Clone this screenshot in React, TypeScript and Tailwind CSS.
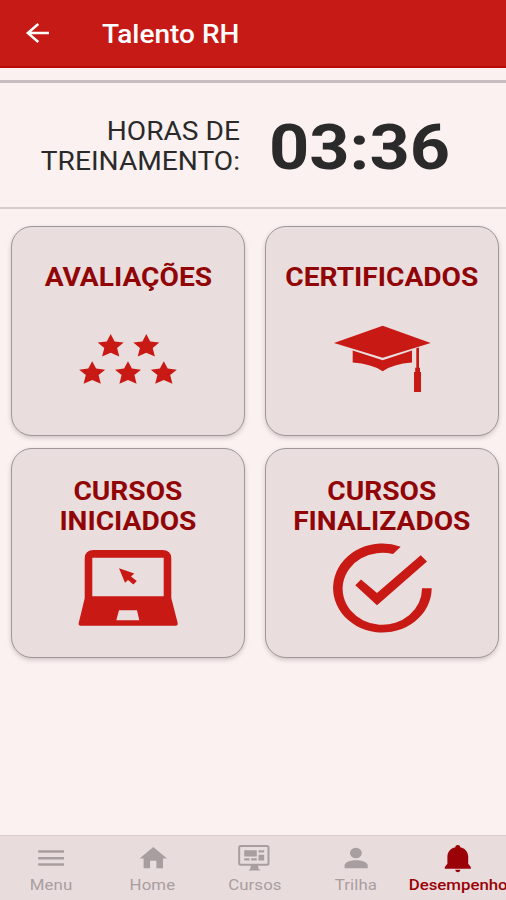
import React from 'react';
import clsx from 'clsx';

const STAR = 'M13 0L16.9 7.4L26 8.6L19.4 13.9L21.6 22.5L13 18.8L4.4 22.5L6.6 13.9L0 8.6L9.1 7.4Z';

const stars = [
  [21.7, 12],
  [57.3, 12],
  [3.2, 39.2],
  [39, 39.2],
  [74.8, 39.2],
];

const StarsIcon = () => (
  <svg width="104" height="96" viewBox="0 0 104 96" fill="currentColor">
    {stars.map(([x, y]) => (
      <path key={`${x}-${y}`} d={STAR} transform={`translate(${x} ${y})`} />
    ))}
  </svg>
);

const CapIcon = () => (
  <svg width="104" height="96" viewBox="0 0 104 96" fill="currentColor">
    <path d="M4 21L52.7 3.7L100.7 21L52.7 35.7Z" />
    <path d="M22.7 28.4L52.7 38.2L82 28.4V40.6Q63 42 52.7 49.3Q42 42 22.7 40.6Z" />
    <path d="M86.3 26.3L89 25.4V45.7H90V50H91V70H84V50H85.2V45.7H86.3Z" />
  </svg>
);

const LaptopIcon = () => (
  <svg width="104" height="96" viewBox="0 0 104 96" fill="currentColor">
    <path
      fillRule="evenodd"
      d="M17.7 10H86.3Q95.3 10 95.3 18.5V58.3L101.7 83Q102 85.7 99.7 85.7H4.7Q2.2 85.7 2.7 83L8.7 58.3V18.5Q8.7 10 17.7 10ZM16.3 17.7V56.2H87.7V17.7ZM43 70.3L40.3 80.3H63.3L61 70.3Z"
    />
    <path d="M43 28.3L58.3 33.4L55 36.6L60.8 41L57.4 44.6L52 40L49 42.7Z" />
  </svg>
);

const CheckIcon = () => (
  <svg width="104" height="96" viewBox="0 0 104 96" fill="currentColor">
    <path d="M101.7 48.2A49.3 44.5 0 1 1 70.7 6.7L63 14.1A39.7 36 0 1 0 92 48.2Z" />
    <path d="M31 39.5L47 53L90.7 15.3L97 21.5L47 65.3L25.3 45.3Z" />
  </svg>
);

const MenuIcon = () => (
  <svg width="36" height="32" viewBox="0 0 36 32" fill="currentColor">
    <path d="M5.2 8.2H31V10.7H5.2ZM5.2 15H31V17.5H5.2ZM5.2 21.3H31V23.8H5.2Z" />
  </svg>
);

const HomeIcon = () => (
  <svg width="36" height="32" viewBox="0 0 36 32" fill="currentColor">
    <path d="M18.3 5L32 16.4H28V26.3H21.4V18.7H15.1V26.3H8.6V16.4H4.6Z" />
  </svg>
);

const CoursesIcon = () => (
  <svg width="36" height="32" viewBox="0 0 36 32" fill="currentColor">
    <rect x="3.2" y="4" width="29.3" height="18.8" rx="1.5" fill="none" stroke="currentColor" strokeWidth="2" />
    <path d="M15 23H21.8L22.4 26.5L24.4 28.4H12.6L14.4 26.5Z" />
    <path d="M8.2 8.3H20.8V14.6H8.2ZM22.5 8.3H28.2V10.6H22.5ZM22.5 12.8H28.2V18.4H22.5ZM8.2 16.2H13.5V18.4H8.2ZM15.2 16.2H20.8V18.4H15.2Z" />
  </svg>
);

const PersonIcon = () => (
  <svg width="36" height="32" viewBox="0 0 36 32" fill="currentColor">
    <ellipse cx="17.9" cy="11" rx="5.9" ry="5.3" />
    <path d="M6.6 26.3V23.6C6.6 20 13 18.3 18.1 18.3S29.7 20 29.7 23.6V26.3Z" />
  </svg>
);

const BellIcon = () => (
  <svg width="36" height="32" viewBox="0 0 36 32" fill="currentColor">
    <path d="M17.8 3C19.3 3 20.2 3.9 20.2 5.2C25.3 6.3 28.2 10 28.2 14.6V21.8L30.8 25V26.8H4.8V25L7.4 21.8V14.6C7.4 10 10.3 6.3 15.4 5.2C15.4 3.9 16.3 3 17.8 3Z" />
    <path d="M15.3 27.8H20.3C20.3 29.3 19.2 30.2 17.8 30.2S15.3 29.3 15.3 27.8Z" />
  </svg>
);

const cards = [
  { lines: ['AVALIAÇÕES'], icon: <StarsIcon />, pad: 'pt-[36px]', gap: 'mt-[29px]' },
  { lines: ['CERTIFICADOS'], icon: <CapIcon />, pad: 'pt-[36px]', gap: 'mt-[29px]' },
  { lines: ['CURSOS', 'INICIADOS'], icon: <LaptopIcon />, pad: 'pt-[28px]', gap: 'mt-[3px]' },
  { lines: ['CURSOS', 'FINALIZADOS'], icon: <CheckIcon />, pad: 'pt-[28px]', gap: 'mt-[3px]' },
];

const tabs = [
  { label: 'Menu', icon: <MenuIcon /> },
  { label: 'Home', icon: <HomeIcon /> },
  { label: 'Cursos', icon: <CoursesIcon /> },
  { label: 'Trilha', icon: <PersonIcon /> },
  { label: 'Desempenho', icon: <BellIcon />, active: true },
];

const App = () => {
  return (
    <div className="flex h-[900px] w-[506px] flex-col overflow-hidden bg-[#fbf1f1] font-['Roboto',sans-serif]">
      <header className="flex h-[68px] shrink-0 items-center border-b-2 border-[#b90806] bg-[#c61a16] pl-[25px] text-white">
        <button aria-label="Voltar">
          <svg width="25" height="22" viewBox="0 0 25 22" fill="none" stroke="currentColor" strokeWidth="2.4">
            <path d="M24 11H3M13.3 2L2.8 11L13.3 20" />
          </svg>
        </button>
        <h1 className="mt-[3px] ml-[52px] origin-left scale-x-[1.12] text-[25px] leading-[30px] font-medium">Talento RH</h1>
      </header>

      <section className="mt-3 flex h-[129px] shrink-0 items-center border-t-3 border-b-2 border-t-[#c9bebf] border-b-[#d6caca] text-[#2b2a2a]">
        <div className="mt-[3px] w-[240px] origin-right scale-x-[1.125] text-right text-[25px] leading-[30px]">
          HORAS DE
          <br />
          TREINAMENTO:
        </div>
        <div className="mt-[6px] ml-[29px] origin-left scale-x-[1.115] text-[63px] leading-[64px] font-bold">03:36</div>
      </section>

      <main className="grid grid-cols-[234px_234px] grid-rows-[210px_210px] gap-x-5 gap-y-3 pt-[17px] pl-[11px]">
        {cards.map((card) => (
          <button
            key={card.lines.join(' ')}
            className={clsx(
              'flex flex-col items-center rounded-[21px] border-[1.5px] border-[#9f9799] bg-[#e9dddd] shadow-[0_2px_4px_rgba(90,60,60,0.25)]',
              card.pad,
            )}
          >
            <span className="flex scale-x-[1.125] flex-col text-[25px] leading-[30px] font-bold whitespace-nowrap text-[#910507]">
              {card.lines.map((line) => (
                <span key={line}>{line}</span>
              ))}
            </span>
            <span className={clsx('text-[#c81914]', card.gap)}>{card.icon}</span>
          </button>
        ))}
      </main>

      <nav className="mt-auto grid h-[65px] w-[509px] shrink-0 grid-cols-5 border-t border-[#d8cccd] bg-[#e9dcdd]">
        {tabs.map((tab) => (
          <button
            key={tab.label}
            className={clsx('flex min-w-0 flex-col items-center pt-1.5', tab.active ? 'text-[#9b0207]' : 'text-[#a89e9f]')}
          >
            {tab.icon}
            <span
              className={clsx(
                'mt-0.5 scale-x-[1.12] text-[15px] leading-[18px] whitespace-nowrap',
                tab.active ? 'font-medium' : 'tracking-[0.1px]',
              )}
            >
              {tab.label}
            </span>
          </button>
        ))}
      </nav>
    </div>
  );
};

export default App;
